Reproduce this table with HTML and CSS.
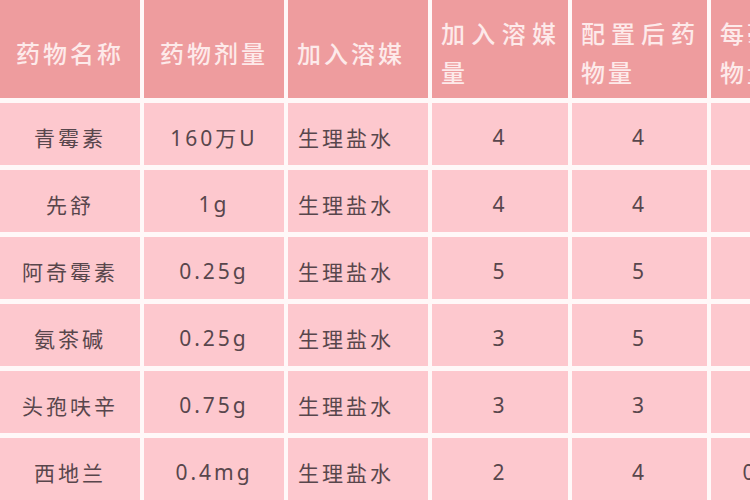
FILE: index.html
```html
<!DOCTYPE html>
<html lang="zh-CN">
<head>
<meta charset="utf-8">
<title>药物配置表</title>
<link rel="stylesheet" href="styles.css">
</head>
<body>
<div class="table">
  <div class="th center">药物名称</div>
  <div class="th center">药物剂量</div>
  <div class="th">加入溶媒</div>
  <div class="th">加入溶媒量</div>
  <div class="th">配置后药物量</div>
  <div class="th plain">每毫升药物量</div>

  <div class="td">青霉素</div>
  <div class="td">160万U</div>
  <div class="td left">生理盐水</div>
  <div class="td">4</div>
  <div class="td">4</div>
  <div class="td">4万U</div>

  <div class="td">先舒</div>
  <div class="td">1g</div>
  <div class="td left">生理盐水</div>
  <div class="td">4</div>
  <div class="td">4</div>
  <div class="td">0.25</div>

  <div class="td">阿奇霉素</div>
  <div class="td">0.25g</div>
  <div class="td left">生理盐水</div>
  <div class="td">5</div>
  <div class="td">5</div>
  <div class="td">0.05</div>

  <div class="td">氨茶碱</div>
  <div class="td">0.25g</div>
  <div class="td left">生理盐水</div>
  <div class="td">3</div>
  <div class="td">5</div>
  <div class="td">0.05</div>

  <div class="td">头孢呋辛</div>
  <div class="td">0.75g</div>
  <div class="td left">生理盐水</div>
  <div class="td">3</div>
  <div class="td">3</div>
  <div class="td">0.25</div>

  <div class="td">西地兰</div>
  <div class="td">0.4mg</div>
  <div class="td left">生理盐水</div>
  <div class="td">2</div>
  <div class="td">4</div>
  <div class="td">0.1mg</div>
</div>
</body>
</html>
```

FILE: styles.css
```css
html, body {
  margin: 0;
  padding: 0;
  background: #fff8f8;
  overflow: hidden;
}

body {
  width: 750px;
  height: 500px;
  font-family: "Noto Sans", "Noto Sans CJK SC", sans-serif;
}

.table {
  display: grid;
  grid-template-columns: 140px 140px 140px 136px 135px 140px;
  grid-template-rows: 98px repeat(6, 62px);
  column-gap: 4px;
  row-gap: 5px;
}

.th {
  background: #ee9c9e;
  color: #fdeaea;
  font-size: 24px;
  font-weight: 500;
  line-height: 39px;
  letter-spacing: 3px;
  padding: 8px 9px 0 9px;
  display: flex;
  align-items: center;
  text-align: justify;
  overflow: hidden;
  white-space: normal;
  word-break: break-all;
}

.th.center {
  justify-content: center;
  text-align: center;
}

.th.plain {
  text-align: left;
}

.td {
  background: #fdc8ce;
  color: #58464c;
  font-size: 21px;
  letter-spacing: 3px;
  padding-top: 5px;
  display: flex;
  align-items: center;
  justify-content: center;
  white-space: nowrap;
  overflow: hidden;
}

.td.left {
  justify-content: flex-start;
  padding-left: 10px;
}
```
